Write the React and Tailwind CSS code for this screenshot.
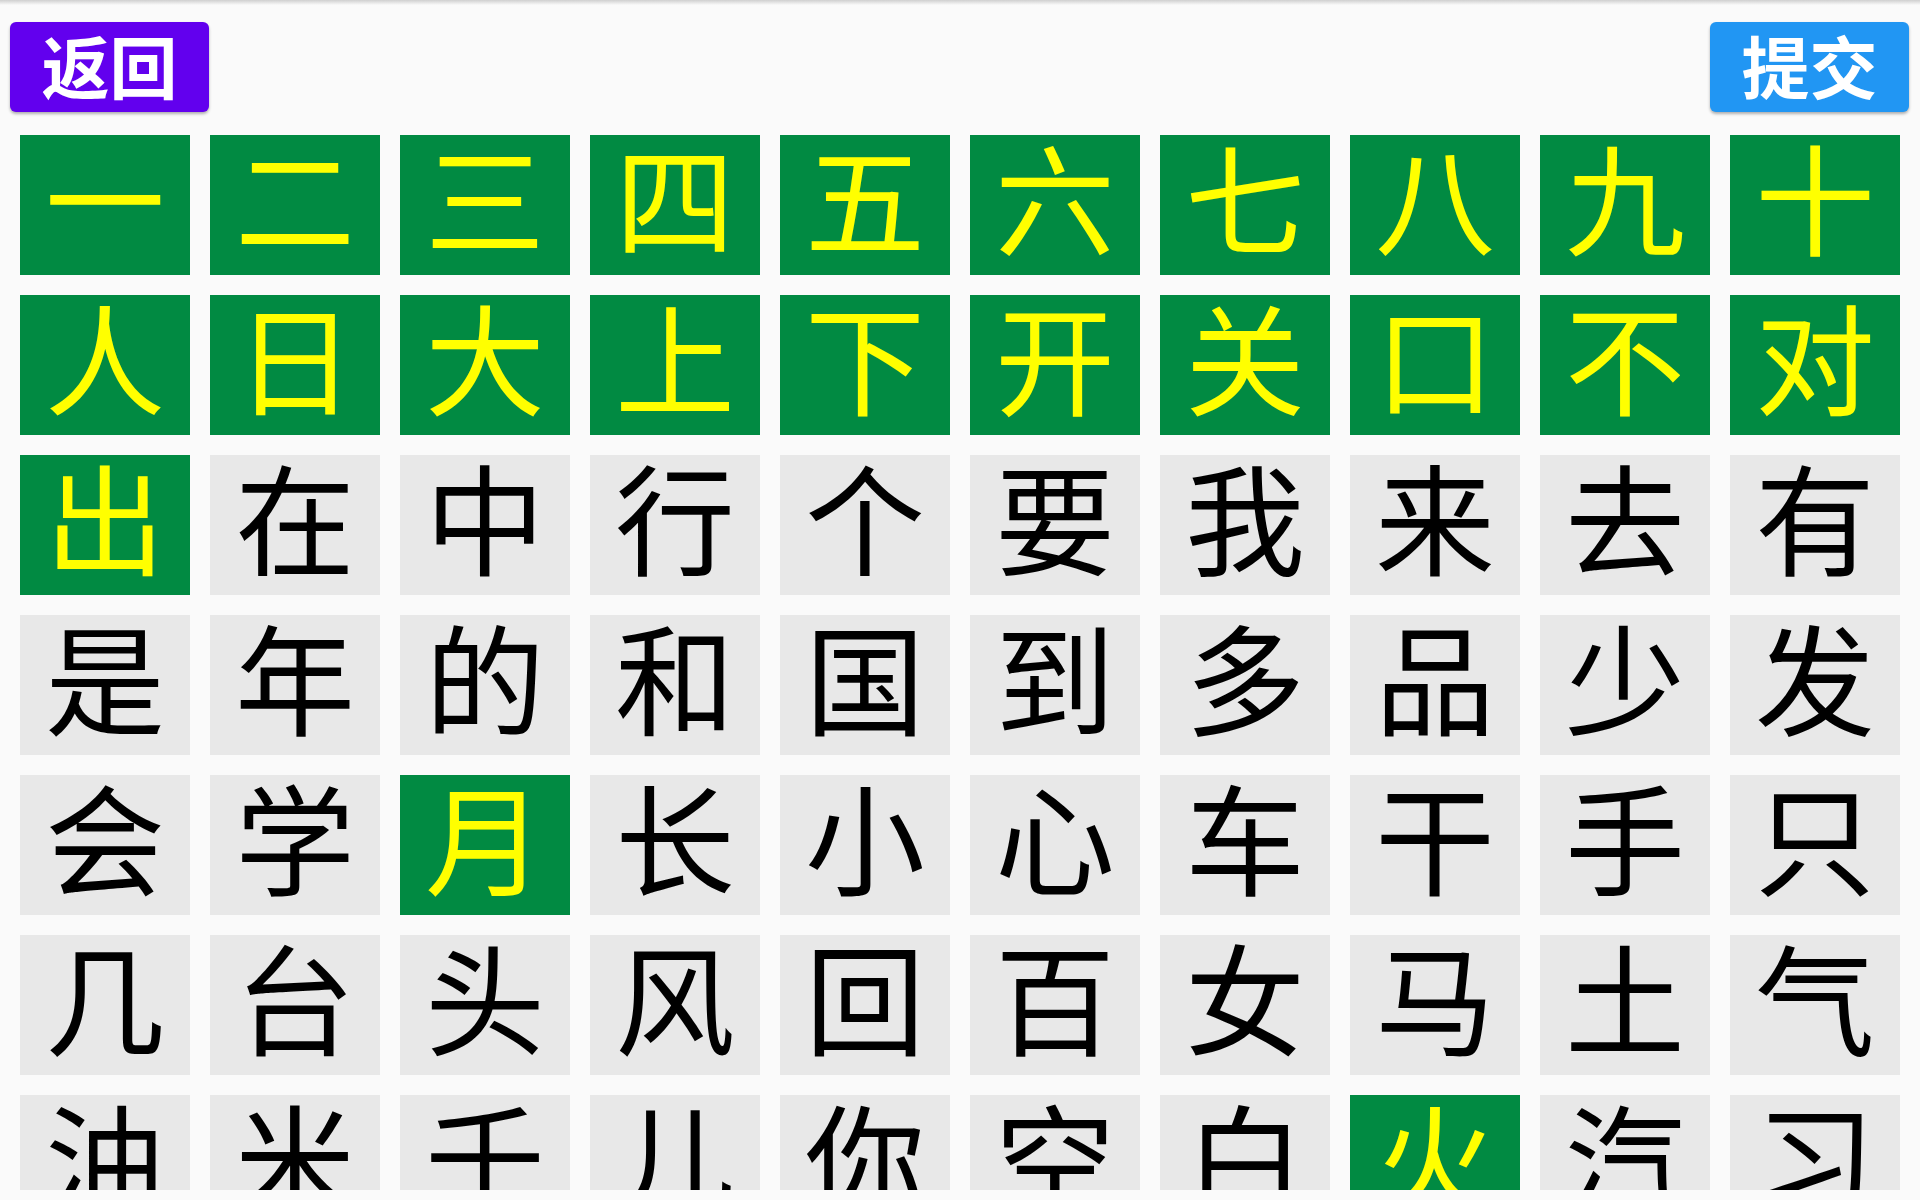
import React from "react";

const rows = [
  "一二三四五六七八九十",
  "人日大上下开关口不对",
  "出在中行个要我来去有",
  "是年的和国到多品少发",
  "会学月长小心车干手只",
  "几台头风回百女马土气",
  "油米千儿你空白火汽习",
];

// characters already learned are shown in green
const learned = new Set([..."一二三四五六七八九十人日大上下开关口不对出月火"]);

const cjk = { fontFamily: '"Noto Sans CJK SC", "Noto Sans", sans-serif' };

const App = () => {
  return (
    <div className="h-screen w-full overflow-hidden bg-[#fafafa] flex flex-col" style={cjk}>
      {/* app bar shadow */}
      <div className="h-[5px] w-full bg-gradient-to-b from-[#cfcfcf] to-[#fafafa]" />

      {/* Buttons */}
      <div className="flex items-start justify-between pl-[10px] pr-[11px] pt-[17px]">
        <button
          type="button"
          className="h-[90px] w-[199px] rounded-[6px] bg-[#6200ee] text-white text-[68px] font-bold leading-none flex items-center justify-center pb-[4px] shadow-[0_2px_3px_rgba(0,0,0,0.3)]"
        >
          返回
        </button>
        <button
          type="button"
          className="h-[90px] w-[199px] rounded-[6px] bg-[#2196f3] text-white text-[68px] font-bold leading-none flex items-center justify-center pb-[4px] shadow-[0_2px_3px_rgba(0,0,0,0.3)]"
        >
          提交
        </button>
      </div>

      {/* Character grid */}
      <div className="mt-[23px] h-[1055px] overflow-hidden pl-[20px]">
        <div className="grid grid-cols-[repeat(10,170px)] auto-rows-[140px] gap-[20px]">
          {rows.join("").split("").map((ch, i) => {
            const on = learned.has(ch) && !(ch === "千" && i < 60);
            return (
              <div
                key={i}
                className={
                  on
                    ? "flex items-center justify-center pb-[20px] bg-[#018a42] text-[#ffff00] text-[120px] leading-none"
                    : "flex items-center justify-center pb-[20px] bg-[#e8e8e8] text-black text-[120px] leading-none"
                }
              >
                {ch}
              </div>
            );
          })}
        </div>
      </div>
    </div>
  );
};

export default App;
